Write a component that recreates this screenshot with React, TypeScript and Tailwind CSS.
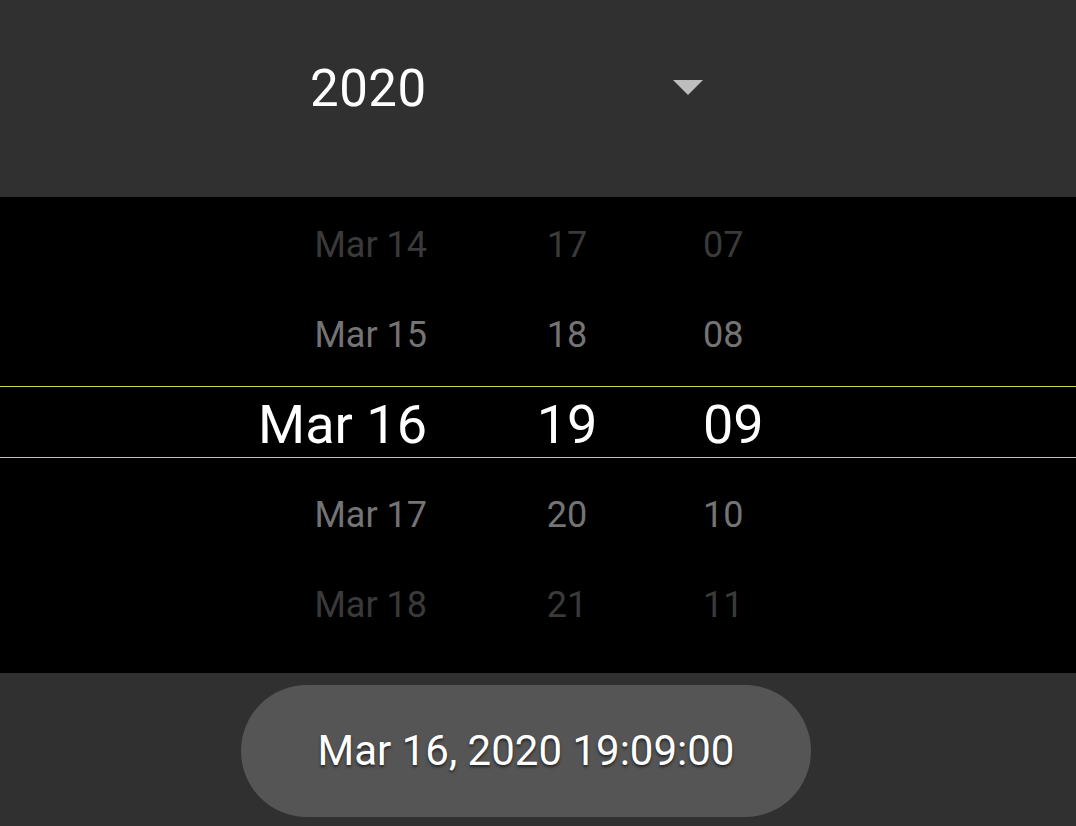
import React from 'react';

const rows = [
    { date: 'Mar 14', hour: '17', min: '07', tone: 'text-[#3a3a3a]' },
    { date: 'Mar 15', hour: '18', min: '08', tone: 'text-[#747474]' },
    { date: 'Mar 16', hour: '19', min: '09', tone: 'selected' },
    { date: 'Mar 17', hour: '20', min: '10', tone: 'text-[#747474]' },
    { date: 'Mar 18', hour: '21', min: '11', tone: 'text-[#3a3a3a]' },
];

export default function App() {
    return (
        <div className="w-[1076px] h-[826px] flex flex-col bg-[#303030] font-['Roboto',sans-serif] select-none overflow-hidden">
            <div className="h-[197px] shrink-0 flex items-center bg-[#303030]">
                <span className="ml-[310px] text-[51px] leading-none text-white tracking-[0.5px] -mt-[20px]">2020</span>
                <svg className="ml-[246px] -mt-[22px]" width="30" height="15" viewBox="0 0 30 15">
                    <polygon points="0,0 30,0 15,15" fill="#bdbdbd" />
                </svg>
            </div>

            <div className="h-[476px] shrink-0 bg-black flex flex-col pt-[3px]">
                {rows.map((r) =>
                    r.tone === 'selected' ? (
                        <div key={r.date} className="h-[90px] shrink-0 pt-[6px]">
                            <div className="h-[72px] flex items-center pt-[5px] border-y-[1.5px] border-[#d2d24a] text-white text-[54px] leading-none">
                                <span className="w-[427px] text-right">{r.date}</span>
                                <span className="w-[280px] text-center">{r.hour}</span>
                                <span className="ml-[-4px]">{r.min}</span>
                            </div>
                        </div>
                    ) : (
                        <div key={r.date} className={`h-[90px] shrink-0 flex items-center text-[36px] leading-none ${r.tone}`}>
                            <span className="w-[427px] text-right">{r.date}</span>
                            <span className="w-[280px] text-center">{r.hour}</span>
                            <span className="ml-[-4px]">{r.min}</span>
                        </div>
                    )
                )}
            </div>

            <div className="flex-1 flex items-start pt-[12px] pl-[241px]">
                <button className="w-[570px] h-[132px] rounded-full bg-[#555555] text-white text-[42px] leading-none [text-shadow:0_2px_3px_rgba(0,0,0,0.6)]">
                    Mar 16, 2020 19:09:00
                </button>
            </div>
        </div>
    );
}
